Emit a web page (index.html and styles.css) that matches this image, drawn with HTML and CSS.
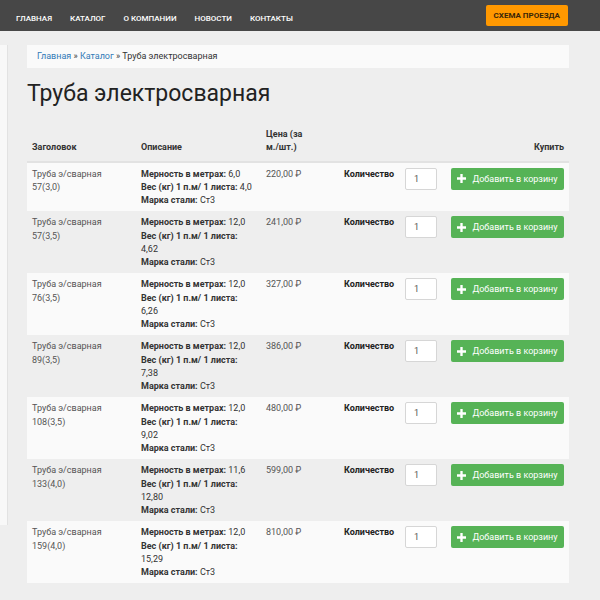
FILE: index.html
```html
<!DOCTYPE html>
<html lang="ru">
<head>
    <meta charset="UTF-8">
    <meta name="viewport" content="width=device-width, initial-scale=1.0">
    <title>Труба электросварная</title>
    <link rel="stylesheet" href="styles.css">
</head>
<body>

    <div class="top-nav">
        <ul class="menu">
            <li><a href="#">Главная</a></li>
            <li><a href="#">Каталог</a></li>
            <li><a href="#">О компании</a></li>
            <li><a href="#">Новости</a></li>
            <li><a href="#">Контакты</a></li>
        </ul>
        <a href="#" class="route-button">Схема проезда</a>
    </div>

    <div class="page">
        <div class="side-panel"></div>

        <div class="content">
            <div class="breadcrumbs">
                <a href="#">Главная</a> &raquo; <a href="#">Каталог</a> &raquo; Труба электросварная
            </div>

            <h1 class="page-title">Труба электросварная</h1>

            <table class="products">
                <colgroup>
                    <col class="c-name">
                    <col class="c-desc">
                    <col class="c-price">
                    <col class="c-label">
                    <col class="c-qty">
                    <col class="c-buy">
                </colgroup>
                <thead>
                    <tr>
                        <th>Заголовок</th>
                        <th>Описание</th>
                        <th>Цена (за<br>м./шт.)</th>
                        <th colspan="3" class="buy-head">Купить</th>
                    </tr>
                </thead>
                <tbody id="rows"></tbody>
            </table>
        </div>
    </div>

    <script>
        const products = [
            ['57(3,0)', '6,0', '4,0', '220,00'],
            ['57(3,5)', '12,0', '4,62', '241,00'],
            ['76(3,5)', '12,0', '6,26', '327,00'],
            ['89(3,5)', '12,0', '7,38', '386,00'],
            ['108(3,5)', '12,0', '9,02', '480,00'],
            ['133(4,0)', '11,6', '12,80', '599,00'],
            ['159(4,0)', '12,0', '15,29', '810,00']
        ];

        const plusIcon = '<svg width="9" height="9" viewBox="0 0 10 10"><path d="M3.7 0h2.6v3.7H10v2.6H6.3V10H3.7V6.3H0V3.7h3.7z" fill="#fff"/></svg>';

        const tbody = document.getElementById('rows');
        products.forEach(p => {
            const row = document.createElement('tr');
            row.innerHTML = `
                <td class="name">Труба э/сварная ${p[0]}</td>
                <td class="desc">
                    <b>Мерность в метрах:</b> ${p[1]}<br>
                    <b>Вес (кг) 1 п.м/ 1 листа:</b> ${p[2]}<br>
                    <b>Марка стали:</b> Ст3
                </td>
                <td class="price">${p[3]} ₽</td>
                <td class="qty-label">Количество</td>
                <td><input type="text" class="qty" value="1"></td>
                <td class="buy"><button class="add-cart">${plusIcon} Добавить в корзину</button></td>`;
            tbody.appendChild(row);
        });
    </script>

</body>
</html>
```

FILE: styles.css
```css
body {
    margin: 0;
    font-family: Roboto, "Liberation Sans", Arial, sans-serif;
    background-color: #eeeeee;
    color: #333;
}

/* Top menu */
.top-nav {
    height: 31px;
    background-color: #474747;
    display: flex;
    align-items: center;
    justify-content: space-between;
    padding: 0 32px 0 16px;
}

.menu {
    list-style: none;
    margin: 0;
    padding: 0;
    display: flex;
    gap: 18px;
}

.menu a {
    color: #fff;
    text-decoration: none;
    text-transform: uppercase;
    font-size: 8px;
    font-weight: 500;
}

.route-button {
    background-color: #ff9800;
    color: #3a2608;
    text-decoration: none;
    text-transform: uppercase;
    font-size: 8px;
    font-weight: 700;
    padding: 6px 8px;
    border-radius: 2px;
}

/* Page */
.page {
    display: flex;
    align-items: flex-start;
}

.side-panel {
    width: 7px;
    height: 480px;
    margin-top: 14px;
    background-color: #f8f8f8;
    border-right: 1px solid #e2e2e2;
}

.content {
    flex: 1;
    margin: 14px 31px 0 19px;
}

.breadcrumbs {
    background-color: #fafafa;
    height: 23px;
    line-height: 23px;
    padding: 0 10px;
    font-size: 9px;
    color: #333;
}

.breadcrumbs a {
    color: #337ab7;
    text-decoration: none;
}

.page-title {
    font-size: 23px;
    font-weight: 400;
    color: #222;
    margin: 12px 0 16px;
}

/* Products table */
.products {
    width: 100%;
    table-layout: fixed;
    border-collapse: collapse;
    font-size: 9px;
    line-height: 13.25px;
}

.c-name { width: 109px; }
.c-desc { width: 125px; }
.c-price { width: 78px; }
.c-label { width: 61px; }
.c-qty { width: 46px; }

.products th {
    text-align: left;
    vertical-align: bottom;
    font-weight: 700;
    padding: 5px 5px 6px;
    border-bottom: 2px solid #e2e2e2;
}

.products th.buy-head {
    text-align: right;
}

.products td {
    vertical-align: top;
    padding: 5px 5px 4px;
}

.products tbody tr:nth-child(odd) {
    background-color: #fafafa;
}

.products td.name {
    color: #555;
}

.products td.price {
    color: #555;
}

.products td.qty-label {
    font-weight: 700;
    color: #222;
}

.qty {
    width: 32px;
    height: 22px;
    box-sizing: border-box;
    border: 1px solid #d6d6d6;
    border-radius: 2px;
    padding: 0 8px;
    font: inherit;
    color: #555;
    background-color: #fff;
}

.products td.buy {
    text-align: right;
}

.add-cart {
    width: 113px;
    height: 22px;
    display: inline-flex;
    align-items: center;
    justify-content: center;
    gap: 6px;
    border: none;
    border-radius: 2px;
    background-color: #56b356;
    color: #fff;
    font-family: inherit;
    font-size: 9px;
    white-space: nowrap;
    cursor: pointer;
}
```
